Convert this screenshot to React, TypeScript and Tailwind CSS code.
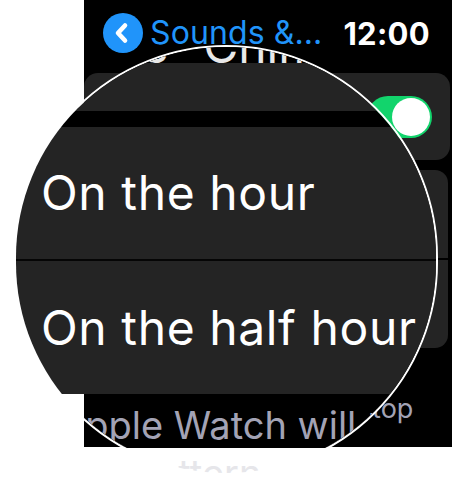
import React from "react";

const font = "[font-family:Inter,'Noto_Sans',sans-serif]";

function BackButton() {
  return (
    <div className="w-[40px] h-[40px] rounded-full bg-[#2094fa] shrink-0">
      <svg viewBox="0 0 40 40" width="40" height="40">
        <path
          d="M22 12.5 L15 20 L22 27.5"
          fill="none"
          stroke="#fff"
          strokeWidth="4.6"
          strokeLinecap="round"
          strokeLinejoin="round"
        />
      </svg>
    </div>
  );
}

function Toggle() {
  return (
    <div className="w-[65px] h-[42px] rounded-full bg-[#12d46c] flex items-center justify-end p-[2px]">
      <div className="w-[38px] h-[38px] rounded-full bg-white" />
    </div>
  );
}

function WatchScreen() {
  return (
    <div className="ml-[84px] w-[368px] h-[447px] bg-black flex flex-col">
      <header className="h-[66px] flex items-center pl-[19px] pr-[22px]">
        <BackButton />
        <span className="ml-[7px] text-[32px] leading-none text-[#2094fa] tracking-[0.1px]">
          Sounds &amp;...
        </span>
        <span className="ml-auto text-[31px] leading-none font-bold text-white tracking-[0.3px]">
          12:00
        </span>
      </header>

      <div className="mt-[7px] mr-[2px] h-[87px] rounded-[14px] bg-[#242424] flex items-center justify-between pl-[18px] pr-[18px]">
        <span className="text-[31px] text-white">Chimes</span>
        <Toggle />
      </div>

      <div className="mt-[10px] mr-[4px] h-[178px] rounded-[13px] bg-[#242424] flex flex-col">
        <div className="h-[88px] flex items-center pl-[18px] text-[31px] text-white">
          On the hour
        </div>
        <div className="h-[2px] bg-black" />
        <div className="flex-1 flex items-center pl-[18px] text-[31px] text-white">
          On the half hour
        </div>
      </div>

      <p className="mt-[45px] pl-[55px] text-[27px] leading-[1.2] text-[#a3a3b5] whitespace-nowrap">
        Apple Watch will stop
      </p>
    </div>
  );
}

function Lens() {
  return (
    <div className="absolute left-[14px] top-[45px] w-[424px] h-[430px] rounded-full border-2 border-white overflow-hidden flex flex-col">
      <div className="h-[16px] bg-black flex items-end pl-[40px] shrink-0">
        <span className="-mb-[7px] text-[48px] leading-none text-[#e8e8e8] whitespace-nowrap [word-spacing:21px]">
          Time Chimes
        </span>
      </div>
      <div className="h-[48px] bg-[#242424] shrink-0" />
      <div className="h-[16px] bg-black shrink-0" />
      <div className="bg-[#242424] flex flex-col shrink-0">
        <div className="h-[132px] flex items-center pl-[25px] text-[48px] leading-none text-white whitespace-nowrap tracking-[0.6px]">
          On the hour
        </div>
        <div className="h-[2px] bg-[#050505]" />
        <div className="h-[133px] flex items-center pl-[25px] text-[48px] leading-none text-white whitespace-nowrap tracking-[0.6px]">
          On the half hour
        </div>
      </div>
      {/* footer: the screen edge shows through under the enlarged text */}
      <div className="relative flex-1 bg-white">
        <div className="ml-[68px] h-[54px] bg-black" />
        <p className="absolute inset-0 pt-[7px] pl-[43px] text-[38px] leading-[48px] text-[#a3a3b5] whitespace-nowrap">
          Apple Watch will tap your
          <br />
          <span className="text-[#e6e6ea]">in a pattern</span>
        </p>
      </div>
    </div>
  );
}

export default function App() {
  return (
    <div className={`relative w-[452px] h-[486px] bg-white overflow-hidden ${font}`}>
      <WatchScreen />
      <Lens />
    </div>
  );
}
